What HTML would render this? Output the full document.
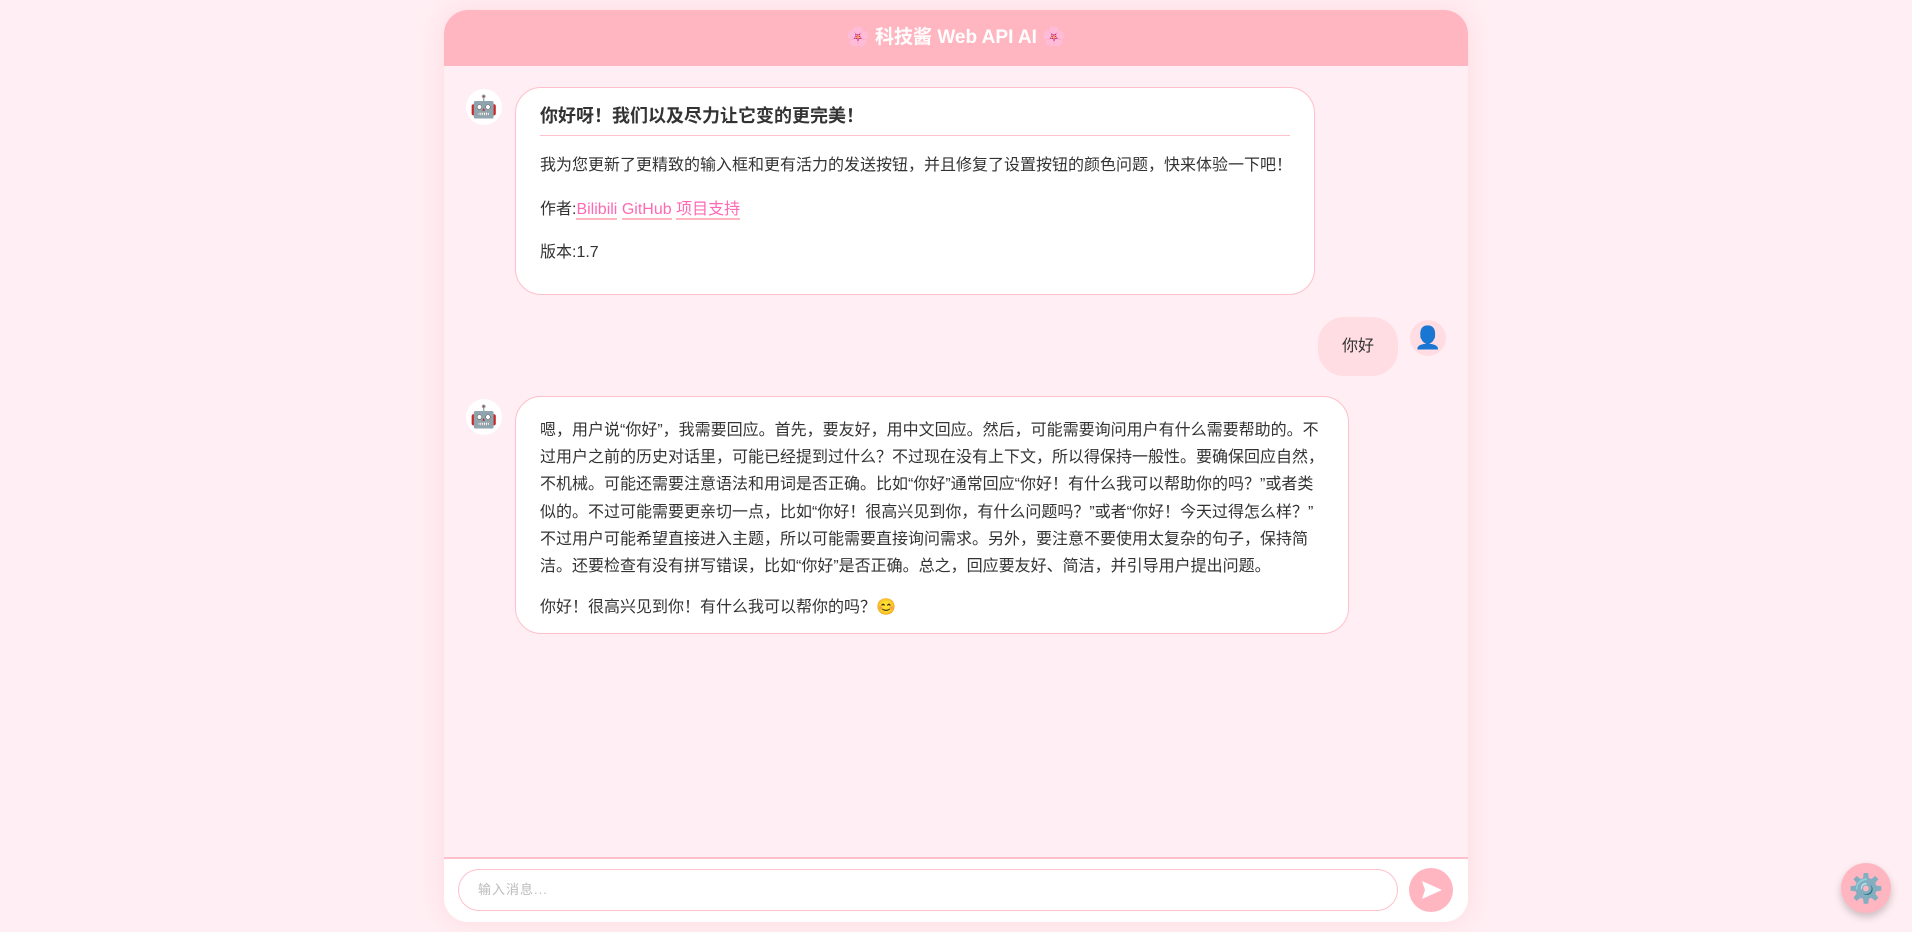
<!DOCTYPE html>
<html><head><meta charset="utf-8"><style>
*{box-sizing:border-box;margin:0;padding:0}
body{width:1912px;height:932px;background:#ffeef3;font-family:"Liberation Sans","Noto Sans CJK SC",sans-serif;color:#333;position:relative;overflow:hidden}
.box{position:absolute;left:444px;top:10px;width:1024px;height:912px;background:#ffeef3;border-radius:24px;overflow:hidden;box-shadow:0 0 24px rgba(255,182,193,.35)}
.hd{height:56px;background:#ffb6c1;color:#fff;font-weight:bold;font-size:19px;text-align:center;line-height:56px}
.av{position:absolute;width:36px;height:36px;border-radius:50%;background:#fff;display:flex;align-items:center;justify-content:center;font-size:22px}
.b{position:absolute;background:#fff;border:1px solid #ffc0cb;border-radius:26px;font-size:16px}
.b p{white-space:nowrap}
a{color:#ff69b4;text-decoration:none;border-bottom:2px solid #ffb6c1;font-weight:normal}
.foot{position:absolute;left:0;top:847px;width:1024px;height:65px;background:#fff;border-top:2px solid #ffc0cb}
.in{position:absolute;left:14px;top:10px;width:940px;height:42px;border:1.5px solid #ffc0cb;border-radius:21px;font-size:13px;color:#bbb;padding-left:19px;line-height:40px;letter-spacing:1px}
.send{position:absolute;left:965px;top:9px;width:44px;height:44px;border-radius:50%;background:#ffb6c1}
.gear{position:absolute;left:1841px;top:863px;width:50px;height:50px;border-radius:50%;background:#ffb6c1;box-shadow:0 4px 8px rgba(0,0,0,.2);display:flex;align-items:center;justify-content:center}
</style></head><body>
<div class="box">
<div class="hd">🌸 科技酱 Web API AI 🌸</div>
<div class="av" style="left:22px;top:79px">🤖</div>
<div class="b" style="left:71px;top:77px;width:800px;height:208px;padding:0 24px">
<div style="font-size:18px;font-weight:bold;margin-top:17px;height:22px;line-height:22px">你好呀！我们以及尽力让它变的更完美！</div>
<div style="border-top:1px solid #ffc0cb;margin-top:8px"></div>
<p style="position:absolute;top:67px;line-height:22px">我为您更新了更精致的输入框和更有活力的发送按钮，并且修复了设置按钮的颜色问题，快来体验一下吧！</p>
<p style="position:absolute;top:111px;line-height:22px">作者:<a>Bilibili</a> <a>GitHub</a> <a>项目支持</a></p>
<p style="position:absolute;top:154px;line-height:22px">版本:1.7</p>
</div>
<div class="b" style="left:874px;top:307px;width:80px;height:59px;background:#ffdde3;border:none;line-height:59px;text-align:center">你好</div>
<div class="av" style="left:966px;top:310px;background:#ffdde3">👤</div>
<div class="av" style="left:22px;top:389px">🤖</div>
<div class="b" style="left:71px;top:386px;width:834px;height:238px;padding:20px 24px 0;line-height:27.2px">
<p>嗯，用户说“你好”，我需要回应。首先，要友好，用中文回应。然后，可能需要询问用户有什么需要帮助的。不</p>
<p>过用户之前的历史对话里，可能已经提到过什么？不过现在没有上下文，所以得保持一般性。要确保回应自然，</p>
<p>不机械。可能还需要注意语法和用词是否正确。比如“你好”通常回应“你好！有什么我可以帮助你的吗？”或者类</p>
<p>似的。不过可能需要更亲切一点，比如“你好！很高兴见到你，有什么问题吗？”或者“你好！今天过得怎么样？”</p>
<p>不过用户可能希望直接进入主题，所以可能需要直接询问需求。另外，要注意不要使用太复杂的句子，保持简</p>
<p>洁。还要检查有没有拼写错误，比如“你好”是否正确。总之，回应要友好、简洁，并引导用户提出问题。</p>
<p style="margin-top:14px">你好！很高兴见到你！有什么我可以帮你的吗？😊</p>
</div>
<div class="foot">
<div class="in">输入消息...</div>
<div class="send"><svg width="44" height="44" viewBox="0 0 44 44"><path d="M13 13 L33 22 L13 31 L16 22 Z" fill="#fff"/></svg></div>
</div>
</div>
<div class="gear"><span style="font-size:28px">⚙️</span></div>
</body></html>
